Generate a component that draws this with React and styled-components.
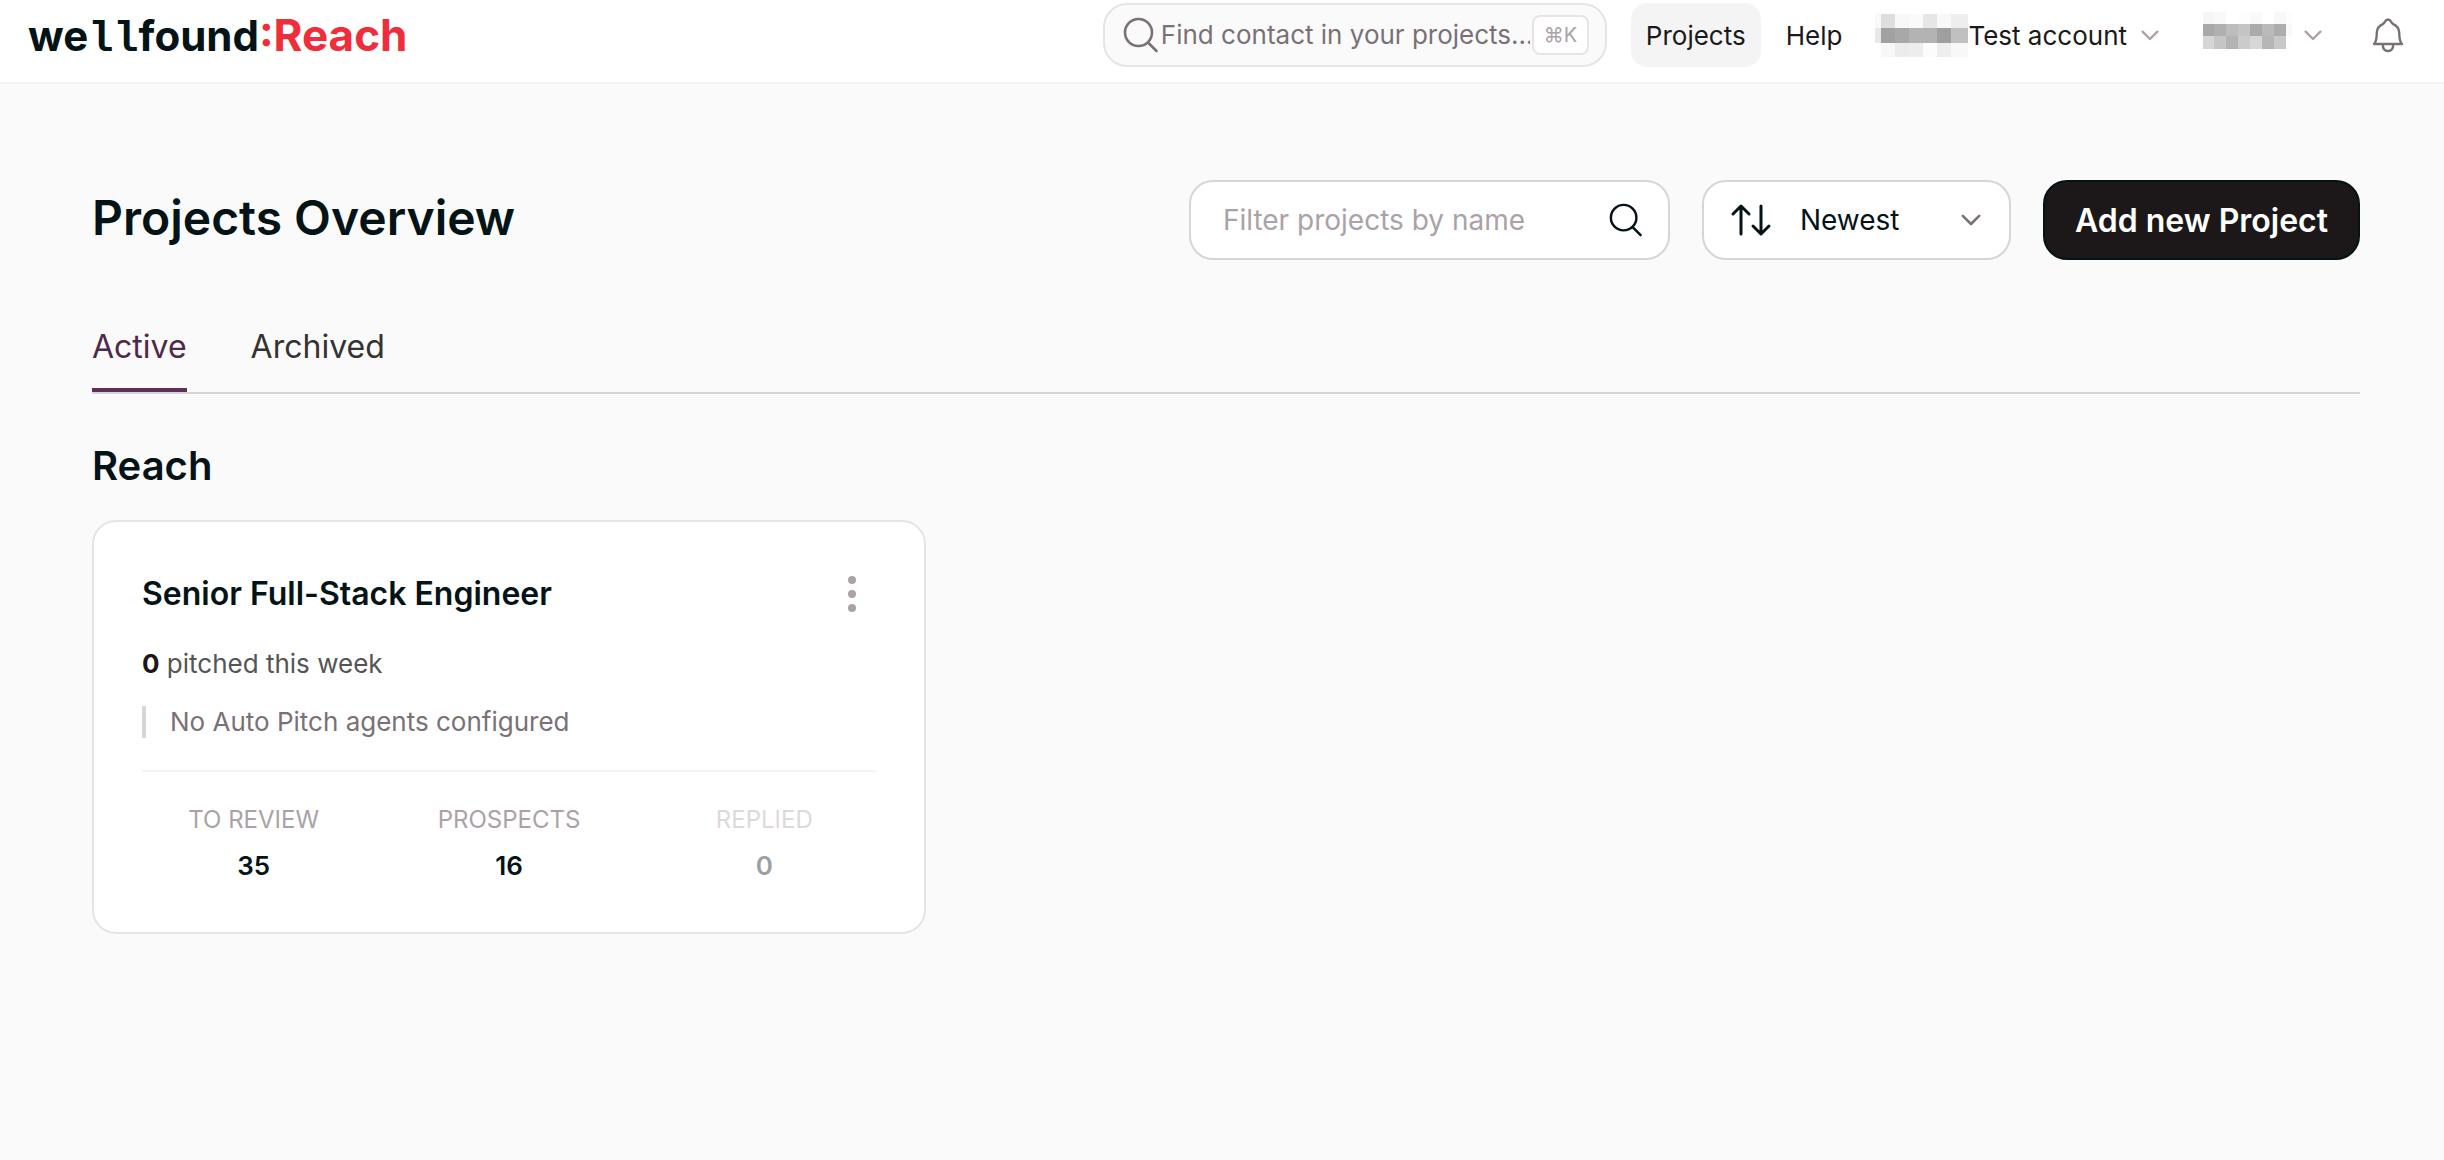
import { useState } from "react";
import styled, { createGlobalStyle } from "styled-components";

const GlobalStyle = createGlobalStyle`
  * {
    box-sizing: border-box;
  }
  body {
    margin: 0;
    background: #fafafa;
    color: #041316;
    font-family: Inter, "Liberation Sans", sans-serif;
  }
  button, input, select {
    font-family: inherit;
    margin: 0;
  }
`;

const Header = styled.header`
  display: flex;
  align-items: center;
  justify-content: space-between;
  height: 84px;
  padding: 0 36px 12px 28px;
  background: #ffffff;
  border-bottom: 2px solid #f3f3f3;
`;
const Logo = styled.a`
  display: flex;
  align-items: baseline;
  padding-top: 4px;
  color: #041316;
  font-size: 42px;
  line-height: 56px;
  font-weight: 700;
  text-decoration: none;
`;
const LogoSlab = styled.span`
  font-family: "Liberation Mono", monospace;
`;
const LogoAccent = styled.span`
  color: #f02d3a;
  font-size: 44px;
`;
const HeaderNav = styled.nav`
  display: flex;
  align-items: center;
`;
const ContactSearch = styled.label`
  display: flex;
  align-items: center;
  gap: 2px;
  width: 504px;
  height: 64px;
  margin-right: 24px;
  padding: 0 16px 0 18px;
  background: #fafafa;
  border: 2px solid #e8e3e5;
  border-radius: 24px;
  color: #7a7177;
`;
const ContactInput = styled.input`
  flex: 1;
  min-width: 0;
  padding: 0;
  border: none;
  outline: none;
  background: transparent;
  font-size: 26px;
  line-height: 32px;
  color: #7a7177;
  &::placeholder {
    color: #7a7177;
    opacity: 1;
  }
`;
const Shortcut = styled.kbd`
  display: flex;
  align-items: center;
  justify-content: center;
  flex: none;
  width: 57px;
  height: 40px;
  background: #ffffff;
  border: 2px solid #e8e3e5;
  border-radius: 8px;
  color: #aba2a8;
  font-family: inherit;
  font-size: 20px;
`;
const NavLink = styled.a`
  display: flex;
  align-items: center;
  height: 64px;
  padding: 0 15px;
  margin-right: 10px;
  background: ${({ $active }) => ($active ? "#f4f4f4" : "transparent")};
  border-radius: 16px;
  color: #1c191a;
  font-size: 26px;
  text-decoration: none;
`;
const NavMenu = styled.button`
  display: flex;
  align-items: center;
  height: 64px;
  padding: 0;
  margin-left: ${({ $space }) => $space}px;
  border: none;
  background: transparent;
  color: #1c191a;
  font-size: 26px;
  cursor: pointer;
  svg:last-child {
    margin-left: ${({ $gap }) => $gap}px;
    color: #aba2a8;
  }
`;
const IconButton = styled.button`
  display: flex;
  align-items: center;
  justify-content: center;
  flex: none;
  width: ${({ $size }) => $size}px;
  height: ${({ $size }) => $size}px;
  padding: 0;
  margin-left: ${({ $space }) => $space || 0}px;
  border: none;
  background: transparent;
  color: ${({ $color }) => $color || "#041316"};
  cursor: pointer;
`;

const Main = styled.main`
  padding: 96px 84px 96px 92px;
`;
const TitleRow = styled.div`
  display: flex;
  align-items: flex-start;
  justify-content: space-between;
`;
const PageTitle = styled.h1`
  margin: 0;
  font-size: 48px;
  line-height: 76px;
  font-weight: 600;
`;
const Actions = styled.div`
  display: flex;
  align-items: center;
  gap: 32px;
`;
const Field = styled.div`
  display: flex;
  align-items: center;
  width: ${({ $width }) => $width}px;
  height: 80px;
  background: #ffffff;
  border: 2px solid #d9d4d7;
  border-radius: 24px;
`;
const FilterInput = styled.input`
  flex: 1;
  min-width: 0;
  height: 76px;
  padding: 0 0 0 32px;
  border: none;
  outline: none;
  background: transparent;
  font-size: 28px;
  color: #041316;
  &::placeholder {
    color: #aba2a8;
    opacity: 1;
  }
`;
const SortField = styled(Field)`
  padding: 0 28px 0 26px;
  gap: 28px;
`;
const SortSelect = styled.select`
  flex: 1;
  min-width: 0;
  height: 76px;
  padding: 0;
  border: none;
  outline: none;
  appearance: none;
  background: transparent;
  color: #041316;
  font-size: 28px;
`;
const AddButton = styled.button`
  height: 80px;
  padding: 0 30px;
  background: #1c1819;
  border: 2px solid #041316;
  border-radius: 24px;
  color: #ffffff;
  font-size: 32px;
  font-weight: 600;
  white-space: nowrap;
  cursor: pointer;
`;
const Tabs = styled.div`
  display: flex;
  gap: 64px;
  margin-top: 62px;
  border-bottom: 2px solid #d9d4d7;
`;
const Tab = styled.button`
  padding: 0 0 16px;
  border: none;
  border-bottom: 4px solid ${({ $active }) => ($active ? "#5f2f56" : "transparent")};
  background: transparent;
  color: ${({ $active }) => ($active ? "#50294a" : "#333333")};
  font-size: 32px;
  line-height: 50px;
  cursor: pointer;
`;
const GroupTitle = styled.h2`
  margin: 44px 0 26px;
  font-size: 40px;
  line-height: 56px;
  font-weight: 600;
`;
const Card = styled.article`
  max-width: 834px;
  padding: 48px;
  background: #ffffff;
  border: 2px solid #e8e3e5;
  border-radius: 24px;
`;
const CardHead = styled.div`
  display: flex;
  align-items: center;
  justify-content: space-between;
`;
const CardTitle = styled.h3`
  margin: 0;
  font-size: 32px;
  line-height: 48px;
  font-weight: 600;
`;
const Pitched = styled.p`
  margin: 26px 0 22px;
  color: #555555;
  font-size: 26px;
  line-height: 40px;
  strong {
    color: #1c1819;
  }
`;
const AgentNote = styled.p`
  margin: 0 0 32px;
  padding-left: 24px;
  border-left: 4px solid #d9d4d7;
  color: #7a7177;
  font-size: 26px;
  line-height: 32px;
`;
const Stats = styled.dl`
  display: grid;
  grid-template-columns: repeat(3, 1fr);
  gap: 32px;
  margin: 0;
  padding-top: 32px;
  border-top: 2px solid #f3f3f3;
  text-align: center;
`;
const Stat = styled.div`
  opacity: ${({ $muted }) => ($muted ? 0.4 : 1)};
`;
const StatLabel = styled.dt`
  margin-bottom: 12px;
  color: #aba2a8;
  font-size: 24px;
  line-height: 32px;
  text-transform: uppercase;
`;
const StatValue = styled.dd`
  margin: 0;
  font-size: 26px;
  line-height: 36px;
  font-weight: 600;
`;

const SearchIcon = ({ size = 36 }) => (
  <svg width={size} height={size} viewBox="0 0 36 36" fill="none" stroke="currentColor" strokeWidth="2.6" strokeLinecap="round">
    <circle cx="15.5" cy="15.5" r="13.5" />
    <path d="M25 25.5L33.5 34" />
  </svg>
);

const Chevron = ({ width = 18, color }) => (
  <svg width={width} height={width * 0.6} viewBox="0 0 20 12" fill="none" stroke={color || "currentColor"} strokeWidth="2.6" strokeLinecap="round" strokeLinejoin="round">
    <path d="M1.8 1.8L10 10L18.2 1.8" />
  </svg>
);

const SortIcon = () => (
  <svg width="42" height="34" viewBox="0 0 42 34" fill="none" stroke="currentColor" strokeWidth="3" strokeLinecap="round" strokeLinejoin="round">
    <path d="M11 31V3M3 11L11 3L19 11" />
    <path d="M31 3V31M23 23L31 31L39 23" />
  </svg>
);

const BellIcon = () => (
  <svg width="32" height="36" viewBox="0 0 32 36" fill="none" stroke="currentColor" strokeWidth="2.4" strokeLinejoin="round" strokeLinecap="round">
    <path d="M2 27H30C28 25 27.2 21 27.2 15.500C27.2 11.500 24.500 8.500 20.800 6.800C19 5.800 19 2.500 16 2.500C13 2.500 13 5.800 11.200 6.800C7.500 8.500 4.800 11.500 4.800 15.500C4.800 21 4 25 2 27Z" />
    <path d="M10.800 27.500C10.800 31.500 12.800 34 16 34C19.200 34 21.200 31.500 21.200 27.500" />
  </svg>
);

const KebabIcon = () => (
  <svg width="8" height="36" viewBox="0 0 8 36" fill="currentColor">
    <circle cx="4" cy="4" r="4" />
    <circle cx="4" cy="18" r="4" />
    <circle cx="4" cy="32" r="4" />
  </svg>
);

// hidden names, drawn as blocks of grey
const COMPANY = {
  label: "Company",
  height: 43,
  cols: [6, 14, 14, 14, 14, 14, 17],
  rows: [14, 15, 14],
  fills: [
    ["#f9f9f9", "#dedede", "#f8f8f8", "#fafafa", "#e6e6e6", "#f8f8f8", "#eeeeee"],
    ["#e8e8e8", "#a1a1a1", "#a8a8a8", "#b3b3b3", "#b3b3b3", "#9f9f9f", "#c0c0c0"],
    ["#ffffff", "#f7f7f7", "#ececec", "#ededed", "#fcfcfc", "#eeeeee", "#f8f8f8"],
  ],
};
const USER = {
  label: "User",
  height: 46,
  cols: [11, 12, 12, 12, 12, 12, 12, 6],
  rows: [12, 12, 13],
  fills: [
    ["#f6f6f6", "#f9f9f9", "#ffffff", "#fcfefd", "#f9f9f9", "#ffffff", "#f8f8f8", "#fdfdfd"],
    ["#a8a8a8", "#b0b0b0", "#bdbdbd", "#c4c4c4", "#aaaaaa", "#bababa", "#adadad", "#f9f9f9"],
    ["#d6d6d6", "#c5c5c5", "#b3b3b3", "#cbcbcb", "#d7d7d7", "#b6b6b6", "#c8c8c8", "#fefefe"],
  ],
};

const offset = (sizes, i) => sizes.slice(0, i).reduce((sum, n) => sum + n, 0);

const Mosaic = ({ label, height, cols, rows, fills }) => (
  <svg width={offset(cols, cols.length)} height={height} role="img" aria-label={label} shapeRendering="crispEdges">
    {fills.map((row, y) =>
      row.map((fill, x) => (
        <rect key={`${x}-${y}`} x={offset(cols, x)} y={offset(rows, y)} width={cols[x]} height={rows[y]} fill={fill} />
      ))
    )}
  </svg>
);

const stats = [
  { label: "To review", value: 35 },
  { label: "Prospects", value: 16 },
  { label: "Replied", value: 0 },
];

export default function App() {
  const [tab, setTab] = useState("Active");
  const [contact, setContact] = useState("");
  const [filter, setFilter] = useState("");
  const [sort, setSort] = useState("Newest");

  return (
    <>
      <GlobalStyle />
      <Header>
        <Logo href="#">
          <span>we</span>
          <LogoSlab>ll</LogoSlab>
          <span>found</span>
          <LogoAccent>:Reach</LogoAccent>
        </Logo>
        <HeaderNav>
          <ContactSearch>
            <SearchIcon />
            <ContactInput
              type="text"
              aria-label="Find contact"
              placeholder="Find contact in your projects..."
              value={contact}
              onChange={(e) => setContact(e.target.value)}
            />
            <Shortcut>⌘K</Shortcut>
          </ContactSearch>
          <NavLink href="#" $active>Projects</NavLink>
          <NavLink href="#">Help</NavLink>
          <NavMenu type="button" $space={8} $gap={14}>
            <Mosaic {...COMPANY} />
            <span>Test account</span>
            <Chevron />
          </NavMenu>
          <NavMenu type="button" $space={44} $gap={12}>
            <Mosaic {...USER} />
            <Chevron />
          </NavMenu>
          <IconButton type="button" aria-label="Notifications" $size={40} $space={46} $color="#7a7177">
            <BellIcon />
          </IconButton>
        </HeaderNav>
      </Header>
      <Main>
        <TitleRow>
          <PageTitle>Projects Overview</PageTitle>
          <Actions>
            <Field $width={481}>
              <FilterInput
                type="text"
                aria-label="Filter projects by name"
                placeholder="Filter projects by name"
                value={filter}
                onChange={(e) => setFilter(e.target.value)}
              />
              <IconButton type="button" aria-label="Search" $size={84}>
                <SearchIcon size={34} />
              </IconButton>
            </Field>
            <SortField $width={309}>
              <SortIcon />
              <SortSelect aria-label="Sort projects" value={sort} onChange={(e) => setSort(e.target.value)}>
                <option>Newest</option>
                <option>Oldest</option>
              </SortSelect>
              <Chevron width={20} color="#7a7177" />
            </SortField>
            <AddButton type="button">Add new Project</AddButton>
          </Actions>
        </TitleRow>
        <Tabs role="tablist">
          {["Active", "Archived"].map((name) => (
            <Tab key={name} type="button" role="tab" aria-selected={tab === name} $active={tab === name} onClick={() => setTab(name)}>
              {name}
            </Tab>
          ))}
        </Tabs>
        <GroupTitle>Reach</GroupTitle>
        <Card>
          <CardHead>
            <CardTitle>Senior Full-Stack Engineer</CardTitle>
            <IconButton type="button" aria-label="Project menu" $size={48} $color="#aba2a8">
              <KebabIcon />
            </IconButton>
          </CardHead>
          <Pitched><strong>0</strong> pitched this week</Pitched>
          <AgentNote>No Auto Pitch agents configured</AgentNote>
          <Stats>
            {stats.map((stat) => (
              <Stat key={stat.label} $muted={stat.value === 0}>
                <StatLabel>{stat.label}</StatLabel>
                <StatValue>{stat.value}</StatValue>
              </Stat>
            ))}
          </Stats>
        </Card>
      </Main>
    </>
  );
}
